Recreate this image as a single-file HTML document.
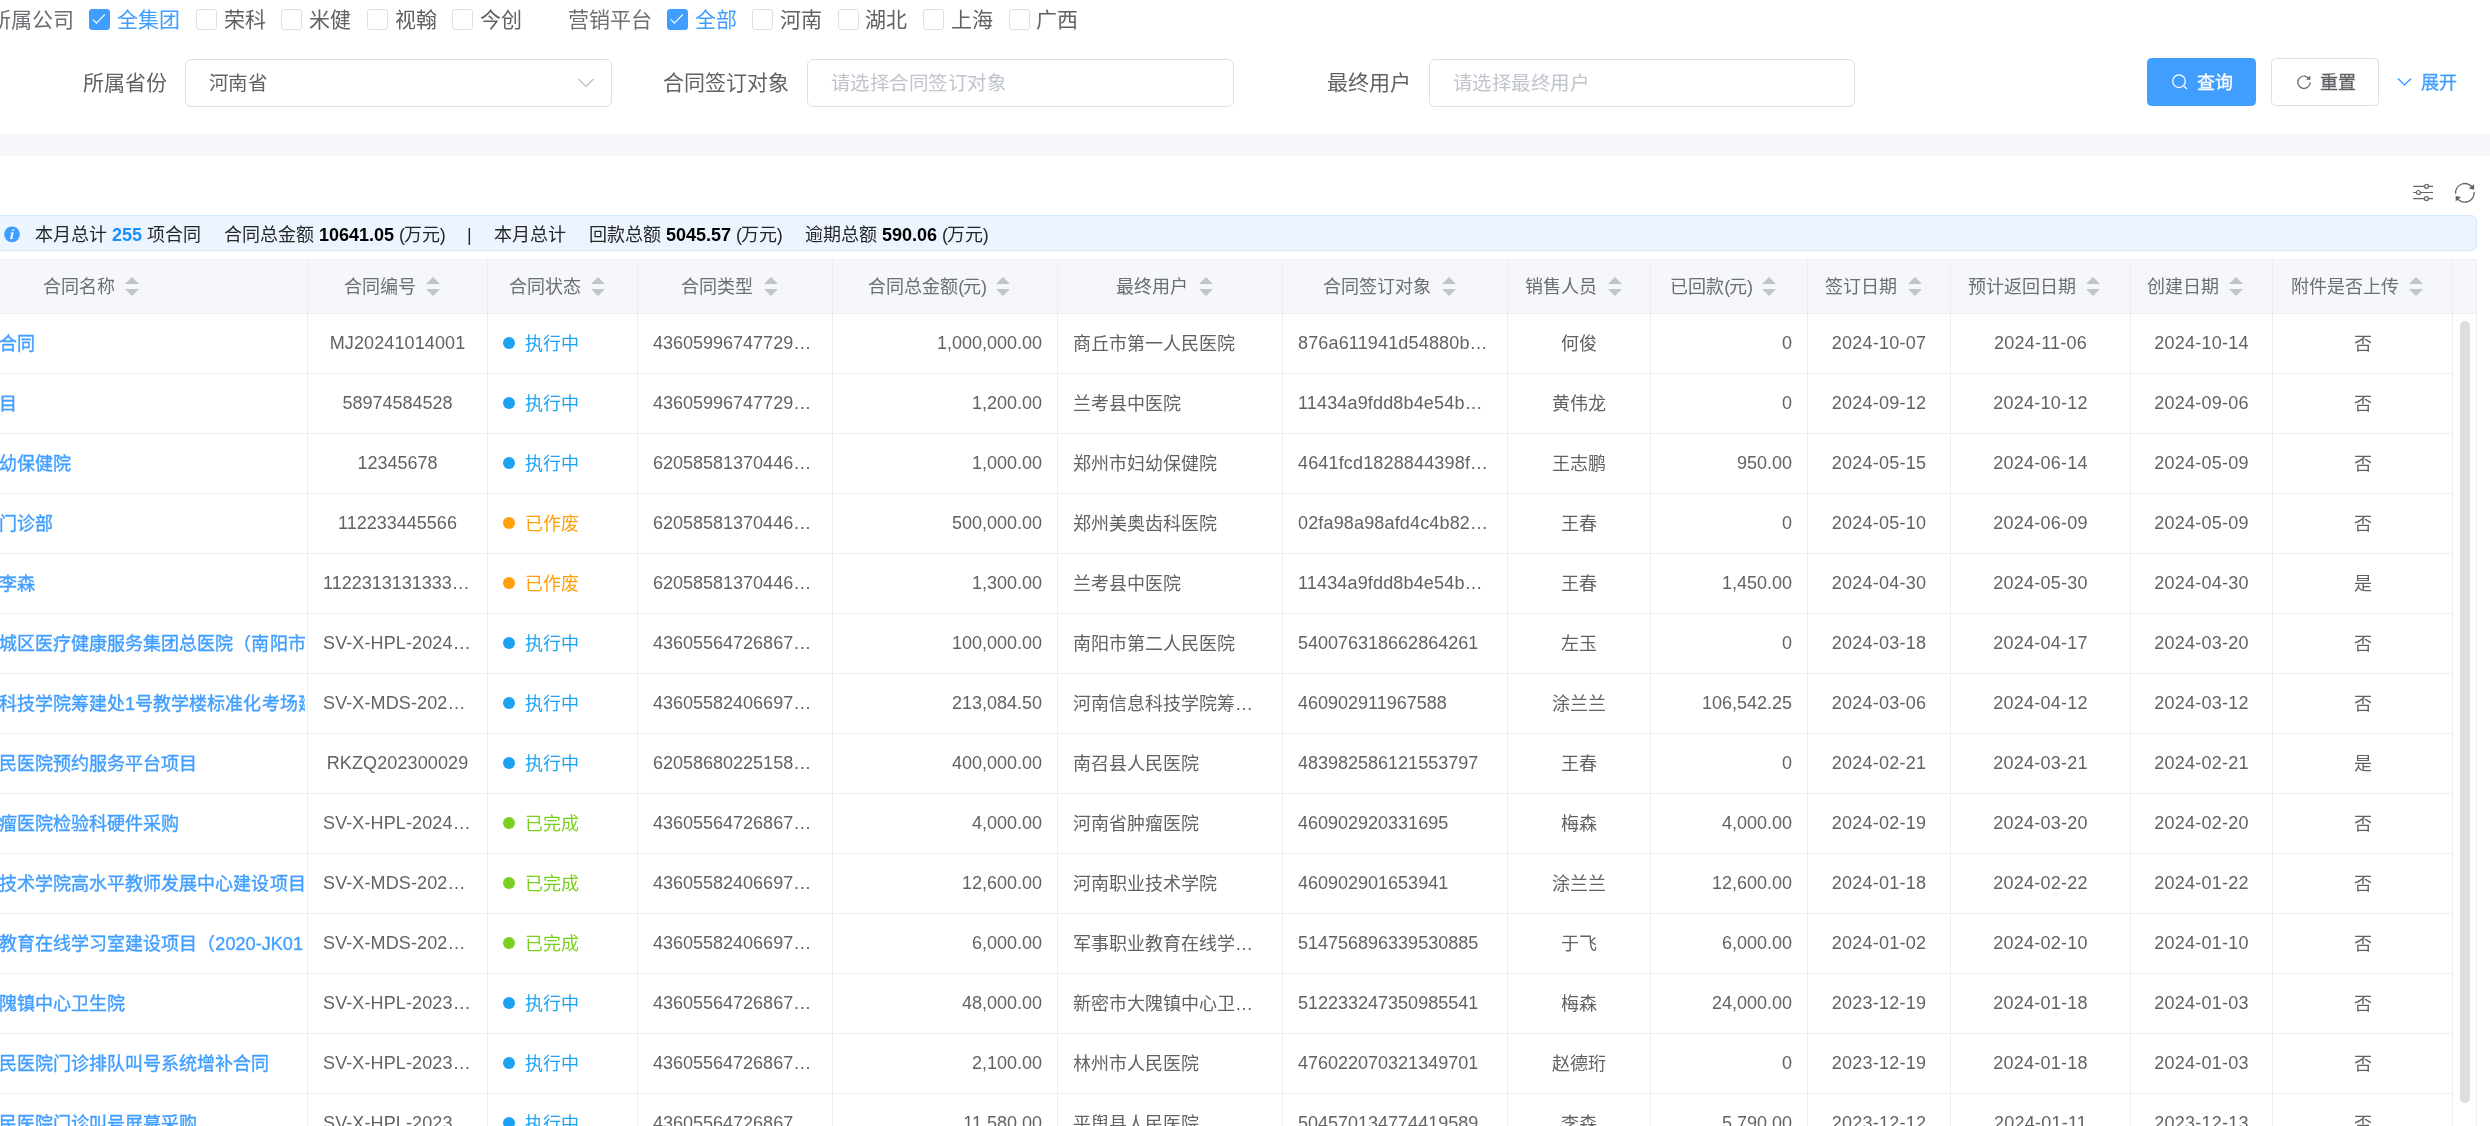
<!DOCTYPE html>
<html lang="zh-CN">
<head>
<meta charset="utf-8">
<title>合同管理</title>
<style>
*{box-sizing:border-box;margin:0;padding:0}
html,body{width:2490px;height:1126px;overflow:hidden;background:#fff}
body{position:relative;will-change:transform;font-family:"Liberation Sans",sans-serif;color:#606266;font-size:21px}
.abs,.t{position:absolute;white-space:nowrap}
.t{line-height:30px;height:30px}
.lab{font-size:21px;color:#606266}
.cb{position:absolute;top:9px;width:21px;height:21px;border:1px solid #dcdfe6;border-radius:3px;background:#fff}
.cb.on{background:#409eff;border-color:#409eff}
.cb.on svg{position:absolute;left:0;top:0}
.ct{top:5px;font-size:21px;color:#606266}
.ct.on{color:#409eff}
.inp{position:absolute;top:59px;height:48px;border:1px solid #dcdfe6;border-radius:6px;background:#fff;font-size:19.5px;letter-spacing:-.5px;line-height:46px;padding-left:22.5px;color:#606266;white-space:nowrap}
.inp.ph{color:#c0c4cc}
.btn{position:absolute;top:58px;height:48px;border-radius:4.5px;font-size:18px;line-height:46px;white-space:nowrap;font-weight:500;-webkit-text-stroke:.3px}
.btn.pri{background:#409eff;border:1px solid #409eff;color:#fff}
.btn.def{background:#fff;border:1px solid #dcdfe6;color:#606266}
.band{position:absolute;left:0;top:134px;width:2490px;height:22px;background:#f5f7fa}
.info{position:absolute;left:-10px;top:215px;width:2487px;height:36px;background:#ecf5ff;border:1px solid #d3e8fc;border-radius:6px}
.it{top:220px;line-height:30px;font-size:18px;color:#262626}
.it b{font-weight:700;color:#000}
.it .n{color:#1890ff;font-weight:700}
/* table */
.tbl{position:absolute;left:0;top:0;width:2490px;height:1126px;font-size:18px;color:#606266}
.thead{position:absolute;left:0;width:2477px;background:#f5f7fa;border-top:1px solid #ebeef5;border-bottom:1px solid #ebeef5}
.th{position:absolute;text-align:center;white-space:nowrap;line-height:53px;color:#6b6e73;overflow:hidden}
.th .lbl{display:inline-block;vertical-align:middle;line-height:30px}
.cw{display:inline-block;vertical-align:middle;position:relative;top:1px;width:36px;height:51px}
.cw i{position:absolute;left:10.5px;width:0;height:0;border:7.5px solid transparent}
.cw .up{border-bottom-color:#c0c4cc;top:7.5px}
.cw .dn{border-top-color:#c0c4cc;bottom:10.5px}
.tr{position:absolute;left:0;width:2453px;height:60px;border-bottom:1px solid #ebeef5}
.td{position:absolute;top:0;height:59px;line-height:59px;padding:0 15px;white-space:nowrap;overflow:hidden}
.td.l{text-align:left}.td.c{text-align:center}.td.r{text-align:right}
.td.lk{color:#409eff;font-weight:500;-webkit-text-stroke:.35px #409eff;padding-right:0;letter-spacing:.07px}
.dot{display:inline-block;width:12px;height:12px;border-radius:50%;vertical-align:middle;margin-right:9.5px;position:relative;top:-2.5px}
.sb{color:#1ca2f5}.sb .dot{background:#1ca2f5}
.so{color:#ffa00a}.so .dot{background:#ffa00a}
.sg{color:#7ad01f}.sg .dot{background:#7ad01f}
.vl{position:absolute;width:1px;height:900px;background:#ebeef5}
.gut{position:absolute;height:900px;background:#fff}
.sbar{position:absolute;left:2460px;top:321px;width:10px;height:782px;border-radius:5px;background:#dddee0}
.p{letter-spacing:-1.3px}
.td.d{letter-spacing:.25px}
.td.hx{letter-spacing:.16px}
.td.cd{letter-spacing:.12px}
.td.sb,.td.so,.td.sg,.td.zh{line-height:61px}
</style>
</head>
<body>
<!-- filter row 1 -->
<div class="t lab" style="left:-10px;top:5px;color:#6c6e73">所属公司</div>
<div class="cb on" style="left:89px"><svg width="19" height="19" viewBox="0 0 19 19"><path d="M2.700 9.300l3.700 3.800 8.500-8.800" fill="none" stroke="#fff" stroke-width="1.15"/></svg></div><div class="t ct on" style="left:117px">全集团</div>
<div class="cb" style="left:196px"></div><div class="t ct" style="left:224px">荣科</div>
<div class="cb" style="left:281px"></div><div class="t ct" style="left:309px">米健</div>
<div class="cb" style="left:367px"></div><div class="t ct" style="left:395px">视翰</div>
<div class="cb" style="left:452px"></div><div class="t ct" style="left:480px">今创</div>
<div class="t lab" style="left:568px;top:5px;color:#6c6e73">营销平台</div>
<div class="cb on" style="left:667px"><svg width="19" height="19" viewBox="0 0 19 19"><path d="M2.700 9.300l3.700 3.800 8.500-8.800" fill="none" stroke="#fff" stroke-width="1.15"/></svg></div><div class="t ct on" style="left:695px">全部</div>
<div class="cb" style="left:752px"></div><div class="t ct" style="left:780px">河南</div>
<div class="cb" style="left:838px"></div><div class="t ct" style="left:865px">湖北</div>
<div class="cb" style="left:923px"></div><div class="t ct" style="left:951px">上海</div>
<div class="cb" style="left:1009px"></div><div class="t ct" style="left:1036px">广西</div>
<!-- filter row 2 -->
<div class="t lab" style="left:83px;top:68px">所属省份</div>
<div class="inp" style="left:185px;width:427px">河南省<svg class="abs" style="right:16px;top:16px" width="18" height="14" viewBox="0 0 18 14"><path d="M1.5 3l7.5 7.5L16.5 3" fill="none" stroke="#c0c4cc" stroke-width="1.5"/></svg></div>
<div class="t lab" style="left:663px;top:68px">合同签订对象</div>
<div class="inp ph" style="left:807px;width:427px">请选择合同签订对象</div>
<div class="t lab" style="left:1327px;top:68px">最终用户</div>
<div class="inp ph" style="left:1429px;width:426px">请选择最终用户</div>
<div class="btn pri" style="left:2147px;width:109px"><svg class="abs" style="left:23px;top:14px" width="18" height="18" viewBox="0 0 18 18"><circle cx="8" cy="8.2" r="6.3" fill="none" stroke="#fff" stroke-width="1.25"/><path d="M12.6 12.800l3.400 3.200" stroke="#fff" stroke-width="1.25"/></svg><span class="abs" style="left:49px;top:1px">查询</span></div>
<div class="btn def" style="left:2271px;width:108px"><svg class="abs" style="left:23.500px;top:14.500px" width="16" height="16" viewBox="0 0 16 16"><path d="M13.300 5A6.200 6.200 0 1 0 14.200 8.200" fill="none" stroke="#606266" stroke-width="1.2"/><path d="M14.300 1.600v4.200H10.100" fill="#606266" stroke="none"/></svg><span class="abs" style="left:48px;top:1px">重置</span></div>
<svg class="abs" style="left:2396.500px;top:77px" width="15" height="10" viewBox="0 0 15 10"><path d="M1 1.5l6.5 6.5L14 1.5" fill="none" stroke="#409eff" stroke-width="1.5"/></svg>
<div class="t" style="left:2421px;top:68px;font-size:18px;font-weight:500;-webkit-text-stroke:.3px;color:#409eff">展开</div>
<div class="band"></div>
<!-- toolbar icons -->
<svg class="abs" style="left:2412px;top:182px" width="22" height="21" viewBox="0 0 22 21"><g fill="none" stroke="#5f6368" stroke-width="1.2"><path d="M1.200 4.300h11.400M16.600 4.300h4.400M1.200 10.500h3.200M8.400 10.500h12.600M1.200 16.600h11.200M16.400 16.600h4.600"/><circle cx="14.600" cy="4.300" r="2"/><circle cx="6.400" cy="10.500" r="2"/><circle cx="14.400" cy="16.600" r="2"/></g></svg>
<svg class="abs" style="left:2454px;top:182px" width="22" height="22" viewBox="0 0 22 22"><g fill="none" stroke="#5f6368" stroke-width="1.3"><path d="M1.640 11.660A9.300 9.300 0 0 1 18.800 5.900"/><path d="M20.160 10.040A9.300 9.300 0 0 1 3 15.800"/></g><path d="M20.100 2.200v5.500l-5.300-1.100zM1.700 19.500v-5.500l5.300 1.100z" fill="#5f6368"/></svg>
<!-- info bar -->
<div class="info"></div>
<svg class="abs" style="left:4px;top:226px" width="16" height="17" viewBox="0 0 16 17"><circle cx="8" cy="8.300" r="7.900" fill="#409eff"/><path d="M8.500 3.500l1.800-.3-.4 1.700-1.800.2zM6.400 6.700l3.300-.4-1.500 6 1.200-.1-.15.600-3.200.4 1.500-6-1.300.1z" fill="#fff"/></svg>
<div class="t it" style="left:35px">本月总计 <span class="n">255</span> 项合同</div>
<div class="t it" style="left:224px">合同总金额 <b>10641.05</b> <span class="p">(</span>万元<span class="p">)</span></div>
<div class="t it" style="left:467px">|</div>
<div class="t it" style="left:494px">本月总计</div>
<div class="t it" style="left:589px">回款总额 <b>5045.57</b> <span class="p">(</span>万元<span class="p">)</span></div>
<div class="t it" style="left:805px">逾期总额 <b>590.06</b> <span class="p">(</span>万元<span class="p">)</span></div>
<div class="tbl">
<div class="thead" style="top:259px;height:55px"></div>
<div class="th" style="left:-114px;width:421px;top:260px;height:53px"><span class="lbl">合同名称</span><span class="cw"><i class="up"></i><i class="dn"></i></span></div>
<div class="th" style="left:308px;width:179px;top:260px;height:53px"><span class="lbl">合同编号</span><span class="cw"><i class="up"></i><i class="dn"></i></span></div>
<div class="th" style="left:488px;width:149px;top:260px;height:53px"><span class="lbl">合同状态</span><span class="cw"><i class="up"></i><i class="dn"></i></span></div>
<div class="th" style="left:638px;width:194px;top:260px;height:53px"><span class="lbl">合同类型</span><span class="cw"><i class="up"></i><i class="dn"></i></span></div>
<div class="th" style="left:833px;width:224px;top:260px;height:53px"><span class="lbl">合同总金额<span class="p">(</span>元<span class="p">)</span></span><span class="cw"><i class="up"></i><i class="dn"></i></span></div>
<div class="th" style="left:1058px;width:224px;top:260px;height:53px"><span class="lbl">最终用户</span><span class="cw"><i class="up"></i><i class="dn"></i></span></div>
<div class="th" style="left:1283px;width:224px;top:260px;height:53px"><span class="lbl">合同签订对象</span><span class="cw"><i class="up"></i><i class="dn"></i></span></div>
<div class="th" style="left:1508px;width:142px;top:260px;height:53px"><span class="lbl">销售人员</span><span class="cw"><i class="up"></i><i class="dn"></i></span></div>
<div class="th" style="left:1651px;width:156px;top:260px;height:53px"><span class="lbl">已回款<span class="p">(</span>元<span class="p">)</span></span><span class="cw"><i class="up"></i><i class="dn"></i></span></div>
<div class="th" style="left:1808px;width:142px;top:260px;height:53px"><span class="lbl">签订日期</span><span class="cw"><i class="up"></i><i class="dn"></i></span></div>
<div class="th" style="left:1951px;width:177px;top:260px;height:53px"><span class="lbl">预计返回日期</span><span class="cw"><i class="up"></i><i class="dn"></i></span></div>
<div class="th" style="left:2131px;width:139px;top:260px;height:53px"><span class="lbl">创建日期</span><span class="cw"><i class="up"></i><i class="dn"></i></span></div>
<div class="th" style="left:2273px;width:179px;top:260px;height:53px"><span class="lbl">附件是否上传</span><span class="cw"><i class="up"></i><i class="dn"></i></span></div>
<div class="tr" style="top:314px">
<div class="td l lk zh" style="left:-16.5px;width:321.5px">合同</div><div class="td c cd" style="left:308px;width:179px">MJ20241014001</div><div class="td l sb" style="left:488px;width:149px"><i class="dot"></i>执行中</div><div class="td l" style="left:638px;width:194px">43605996747729…</div><div class="td r" style="left:833px;width:224px">1,000,000.00</div><div class="td l zh" style="left:1058px;width:224px">商丘市第一人民医院</div><div class="td l hx" style="left:1283px;width:224px">876a611941d54880b…</div><div class="td c zh" style="left:1508px;width:142px">何俊</div><div class="td r" style="left:1651px;width:156px">0</div><div class="td c d" style="left:1808px;width:142px">2024-10-07</div><div class="td c d" style="left:1951px;width:179px">2024-11-06</div><div class="td c d" style="left:2131px;width:141px">2024-10-14</div><div class="td c zh" style="left:2273px;width:179px">否</div>
</div>
<div class="tr" style="top:374px">
<div class="td l lk zh" style="left:-16.5px;width:321.5px">目</div><div class="td c" style="left:308px;width:179px">58974584528</div><div class="td l sb" style="left:488px;width:149px"><i class="dot"></i>执行中</div><div class="td l" style="left:638px;width:194px">43605996747729…</div><div class="td r" style="left:833px;width:224px">1,200.00</div><div class="td l zh" style="left:1058px;width:224px">兰考县中医院</div><div class="td l hx" style="left:1283px;width:224px">11434a9fdd8b4e54b…</div><div class="td c zh" style="left:1508px;width:142px">黄伟龙</div><div class="td r" style="left:1651px;width:156px">0</div><div class="td c d" style="left:1808px;width:142px">2024-09-12</div><div class="td c d" style="left:1951px;width:179px">2024-10-12</div><div class="td c d" style="left:2131px;width:141px">2024-09-06</div><div class="td c zh" style="left:2273px;width:179px">否</div>
</div>
<div class="tr" style="top:434px">
<div class="td l lk zh" style="left:-16.5px;width:321.5px">幼保健院</div><div class="td c" style="left:308px;width:179px">12345678</div><div class="td l sb" style="left:488px;width:149px"><i class="dot"></i>执行中</div><div class="td l" style="left:638px;width:194px">62058581370446…</div><div class="td r" style="left:833px;width:224px">1,000.00</div><div class="td l zh" style="left:1058px;width:224px">郑州市妇幼保健院</div><div class="td l hx" style="left:1283px;width:224px">4641fcd1828844398f…</div><div class="td c zh" style="left:1508px;width:142px">王志鹏</div><div class="td r" style="left:1651px;width:156px">950.00</div><div class="td c d" style="left:1808px;width:142px">2024-05-15</div><div class="td c d" style="left:1951px;width:179px">2024-06-14</div><div class="td c d" style="left:2131px;width:141px">2024-05-09</div><div class="td c zh" style="left:2273px;width:179px">否</div>
</div>
<div class="tr" style="top:494px">
<div class="td l lk zh" style="left:-16.5px;width:321.5px">门诊部</div><div class="td c" style="left:308px;width:179px">112233445566</div><div class="td l so" style="left:488px;width:149px"><i class="dot"></i>已作废</div><div class="td l" style="left:638px;width:194px">62058581370446…</div><div class="td r" style="left:833px;width:224px">500,000.00</div><div class="td l zh" style="left:1058px;width:224px">郑州美奥齿科医院</div><div class="td l hx" style="left:1283px;width:224px">02fa98a98afd4c4b82…</div><div class="td c zh" style="left:1508px;width:142px">王春</div><div class="td r" style="left:1651px;width:156px">0</div><div class="td c d" style="left:1808px;width:142px">2024-05-10</div><div class="td c d" style="left:1951px;width:179px">2024-06-09</div><div class="td c d" style="left:2131px;width:141px">2024-05-09</div><div class="td c zh" style="left:2273px;width:179px">否</div>
</div>
<div class="tr" style="top:554px">
<div class="td l lk zh" style="left:-16.5px;width:321.5px">李森</div><div class="td l" style="left:308px;width:179px">1122313131333…</div><div class="td l so" style="left:488px;width:149px"><i class="dot"></i>已作废</div><div class="td l" style="left:638px;width:194px">62058581370446…</div><div class="td r" style="left:833px;width:224px">1,300.00</div><div class="td l zh" style="left:1058px;width:224px">兰考县中医院</div><div class="td l hx" style="left:1283px;width:224px">11434a9fdd8b4e54b…</div><div class="td c zh" style="left:1508px;width:142px">王春</div><div class="td r" style="left:1651px;width:156px">1,450.00</div><div class="td c d" style="left:1808px;width:142px">2024-04-30</div><div class="td c d" style="left:1951px;width:179px">2024-05-30</div><div class="td c d" style="left:2131px;width:141px">2024-04-30</div><div class="td c zh" style="left:2273px;width:179px">是</div>
</div>
<div class="tr" style="top:614px">
<div class="td l lk zh" style="left:-16.5px;width:321.5px">城区医疗健康服务集团总医院（南阳市</div><div class="td l cd" style="left:308px;width:179px">SV-X-HPL-2024…</div><div class="td l sb" style="left:488px;width:149px"><i class="dot"></i>执行中</div><div class="td l" style="left:638px;width:194px">43605564726867…</div><div class="td r" style="left:833px;width:224px">100,000.00</div><div class="td l zh" style="left:1058px;width:224px">南阳市第二人民医院</div><div class="td l" style="left:1283px;width:224px">540076318662864261</div><div class="td c zh" style="left:1508px;width:142px">左玉</div><div class="td r" style="left:1651px;width:156px">0</div><div class="td c d" style="left:1808px;width:142px">2024-03-18</div><div class="td c d" style="left:1951px;width:179px">2024-04-17</div><div class="td c d" style="left:2131px;width:141px">2024-03-20</div><div class="td c zh" style="left:2273px;width:179px">否</div>
</div>
<div class="tr" style="top:674px">
<div class="td l lk zh" style="left:-16.5px;width:321.5px">科技学院筹建处1号教学楼标准化考场建</div><div class="td l cd" style="left:308px;width:179px">SV-X-MDS-202…</div><div class="td l sb" style="left:488px;width:149px"><i class="dot"></i>执行中</div><div class="td l" style="left:638px;width:194px">43605582406697…</div><div class="td r" style="left:833px;width:224px">213,084.50</div><div class="td l zh" style="left:1058px;width:224px">河南信息科技学院筹…</div><div class="td l" style="left:1283px;width:224px">460902911967588</div><div class="td c zh" style="left:1508px;width:142px">涂兰兰</div><div class="td r" style="left:1651px;width:156px">106,542.25</div><div class="td c d" style="left:1808px;width:142px">2024-03-06</div><div class="td c d" style="left:1951px;width:179px">2024-04-12</div><div class="td c d" style="left:2131px;width:141px">2024-03-12</div><div class="td c zh" style="left:2273px;width:179px">否</div>
</div>
<div class="tr" style="top:734px">
<div class="td l lk zh" style="left:-16.5px;width:321.5px">民医院预约服务平台项目</div><div class="td c cd" style="left:308px;width:179px">RKZQ202300029</div><div class="td l sb" style="left:488px;width:149px"><i class="dot"></i>执行中</div><div class="td l" style="left:638px;width:194px">62058680225158…</div><div class="td r" style="left:833px;width:224px">400,000.00</div><div class="td l zh" style="left:1058px;width:224px">南召县人民医院</div><div class="td l" style="left:1283px;width:224px">483982586121553797</div><div class="td c zh" style="left:1508px;width:142px">王春</div><div class="td r" style="left:1651px;width:156px">0</div><div class="td c d" style="left:1808px;width:142px">2024-02-21</div><div class="td c d" style="left:1951px;width:179px">2024-03-21</div><div class="td c d" style="left:2131px;width:141px">2024-02-21</div><div class="td c zh" style="left:2273px;width:179px">是</div>
</div>
<div class="tr" style="top:794px">
<div class="td l lk zh" style="left:-16.5px;width:321.5px">瘤医院检验科硬件采购</div><div class="td l cd" style="left:308px;width:179px">SV-X-HPL-2024…</div><div class="td l sg" style="left:488px;width:149px"><i class="dot"></i>已完成</div><div class="td l" style="left:638px;width:194px">43605564726867…</div><div class="td r" style="left:833px;width:224px">4,000.00</div><div class="td l zh" style="left:1058px;width:224px">河南省肿瘤医院</div><div class="td l" style="left:1283px;width:224px">460902920331695</div><div class="td c zh" style="left:1508px;width:142px">梅森</div><div class="td r" style="left:1651px;width:156px">4,000.00</div><div class="td c d" style="left:1808px;width:142px">2024-02-19</div><div class="td c d" style="left:1951px;width:179px">2024-03-20</div><div class="td c d" style="left:2131px;width:141px">2024-02-20</div><div class="td c zh" style="left:2273px;width:179px">否</div>
</div>
<div class="tr" style="top:854px">
<div class="td l lk zh" style="left:-16.5px;width:321.5px">技术学院高水平教师发展中心建设项目</div><div class="td l cd" style="left:308px;width:179px">SV-X-MDS-202…</div><div class="td l sg" style="left:488px;width:149px"><i class="dot"></i>已完成</div><div class="td l" style="left:638px;width:194px">43605582406697…</div><div class="td r" style="left:833px;width:224px">12,600.00</div><div class="td l zh" style="left:1058px;width:224px">河南职业技术学院</div><div class="td l" style="left:1283px;width:224px">460902901653941</div><div class="td c zh" style="left:1508px;width:142px">涂兰兰</div><div class="td r" style="left:1651px;width:156px">12,600.00</div><div class="td c d" style="left:1808px;width:142px">2024-01-18</div><div class="td c d" style="left:1951px;width:179px">2024-02-22</div><div class="td c d" style="left:2131px;width:141px">2024-01-22</div><div class="td c zh" style="left:2273px;width:179px">否</div>
</div>
<div class="tr" style="top:914px">
<div class="td l lk zh" style="left:-16.5px;width:321.5px">教育在线学习室建设项目（2020-JK01</div><div class="td l cd" style="left:308px;width:179px">SV-X-MDS-202…</div><div class="td l sg" style="left:488px;width:149px"><i class="dot"></i>已完成</div><div class="td l" style="left:638px;width:194px">43605582406697…</div><div class="td r" style="left:833px;width:224px">6,000.00</div><div class="td l zh" style="left:1058px;width:224px">军事职业教育在线学…</div><div class="td l" style="left:1283px;width:224px">514756896339530885</div><div class="td c zh" style="left:1508px;width:142px">于飞</div><div class="td r" style="left:1651px;width:156px">6,000.00</div><div class="td c d" style="left:1808px;width:142px">2024-01-02</div><div class="td c d" style="left:1951px;width:179px">2024-02-10</div><div class="td c d" style="left:2131px;width:141px">2024-01-10</div><div class="td c zh" style="left:2273px;width:179px">否</div>
</div>
<div class="tr" style="top:974px">
<div class="td l lk zh" style="left:-16.5px;width:321.5px">隗镇中心卫生院</div><div class="td l cd" style="left:308px;width:179px">SV-X-HPL-2023…</div><div class="td l sb" style="left:488px;width:149px"><i class="dot"></i>执行中</div><div class="td l" style="left:638px;width:194px">43605564726867…</div><div class="td r" style="left:833px;width:224px">48,000.00</div><div class="td l zh" style="left:1058px;width:224px">新密市大隗镇中心卫…</div><div class="td l" style="left:1283px;width:224px">512233247350985541</div><div class="td c zh" style="left:1508px;width:142px">梅森</div><div class="td r" style="left:1651px;width:156px">24,000.00</div><div class="td c d" style="left:1808px;width:142px">2023-12-19</div><div class="td c d" style="left:1951px;width:179px">2024-01-18</div><div class="td c d" style="left:2131px;width:141px">2024-01-03</div><div class="td c zh" style="left:2273px;width:179px">否</div>
</div>
<div class="tr" style="top:1034px">
<div class="td l lk zh" style="left:-16.5px;width:321.5px">民医院门诊排队叫号系统增补合同</div><div class="td l cd" style="left:308px;width:179px">SV-X-HPL-2023…</div><div class="td l sb" style="left:488px;width:149px"><i class="dot"></i>执行中</div><div class="td l" style="left:638px;width:194px">43605564726867…</div><div class="td r" style="left:833px;width:224px">2,100.00</div><div class="td l zh" style="left:1058px;width:224px">林州市人民医院</div><div class="td l" style="left:1283px;width:224px">476022070321349701</div><div class="td c zh" style="left:1508px;width:142px">赵德珩</div><div class="td r" style="left:1651px;width:156px">0</div><div class="td c d" style="left:1808px;width:142px">2023-12-19</div><div class="td c d" style="left:1951px;width:179px">2024-01-18</div><div class="td c d" style="left:2131px;width:141px">2024-01-03</div><div class="td c zh" style="left:2273px;width:179px">否</div>
</div>
<div class="tr" style="top:1094px">
<div class="td l lk zh" style="left:-16.5px;width:321.5px">民医院门诊叫号屏幕采购</div><div class="td l cd" style="left:308px;width:179px">SV-X-HPL-2023…</div><div class="td l sb" style="left:488px;width:149px"><i class="dot"></i>执行中</div><div class="td l" style="left:638px;width:194px">43605564726867…</div><div class="td r" style="left:833px;width:224px">11,580.00</div><div class="td l zh" style="left:1058px;width:224px">平舆县人民医院</div><div class="td l" style="left:1283px;width:224px">504570134774419589</div><div class="td c zh" style="left:1508px;width:142px">李森</div><div class="td r" style="left:1651px;width:156px">5,790.00</div><div class="td c d" style="left:1808px;width:142px">2023-12-12</div><div class="td c d" style="left:1951px;width:179px">2024-01-11</div><div class="td c d" style="left:2131px;width:141px">2023-12-13</div><div class="td c zh" style="left:2273px;width:179px">否</div>
</div>
<div class="vl" style="left:307px;top:259px"></div>
<div class="vl" style="left:487px;top:259px"></div>
<div class="vl" style="left:637px;top:259px"></div>
<div class="vl" style="left:832px;top:259px"></div>
<div class="vl" style="left:1057px;top:259px"></div>
<div class="vl" style="left:1282px;top:259px"></div>
<div class="vl" style="left:1507px;top:259px"></div>
<div class="vl" style="left:1650px;top:259px"></div>
<div class="vl" style="left:1807px;top:259px"></div>
<div class="vl" style="left:1950px;top:259px"></div>
<div class="vl" style="left:2130px;top:259px"></div>
<div class="vl" style="left:2272px;top:259px"></div>
<div class="vl" style="left:2452px;top:259px"></div>
<div class="vl" style="left:2476px;top:259px"></div>
<div class="gut" style="left:2453px;width:23px;top:314px"></div>
<div class="sbar"></div>
</div>
</body>
</html>
